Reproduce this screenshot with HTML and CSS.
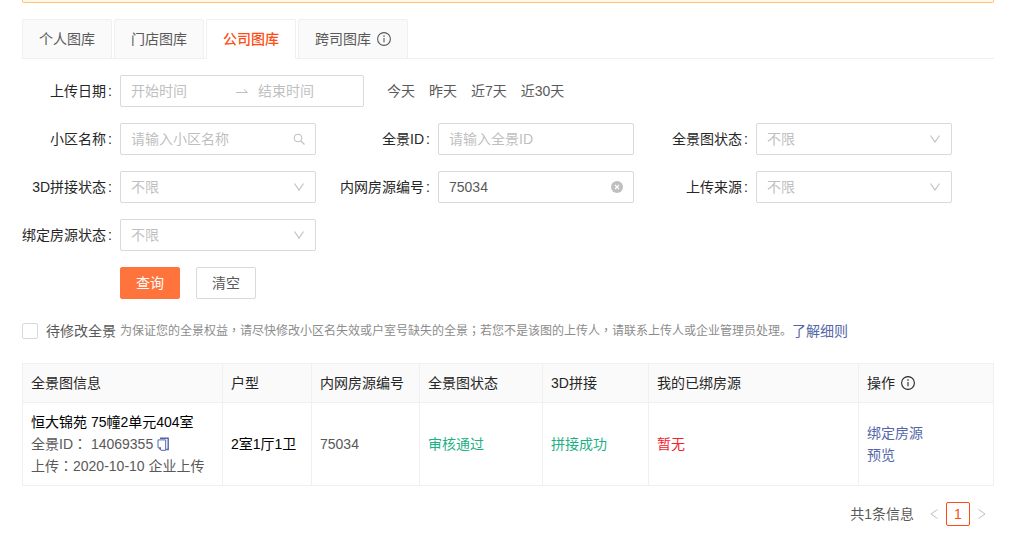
FILE: index.html
```html
<!DOCTYPE html>
<html lang="zh-CN">
<head>
<meta charset="utf-8">
<meta name="viewport" content="width=device-width, initial-scale=1">
<title>公司图库</title>
<link rel="stylesheet" href="styles.css">
</head>
<body>
<svg class="defs" aria-hidden="true">
  <symbol id="info" viewBox="0 0 14 14"><circle cx="7" cy="7" r="6.4" fill="none" stroke="currentColor" stroke-width="1.1"/><path d="M7 6v4.3" stroke="currentColor" stroke-width="1.1"/><circle cx="7" cy="4.1" r=".8" fill="currentColor"/></symbol>
  <symbol id="down" viewBox="0 0 12 12"><path d="M1.5 2.5 6 9l4.500-6.500" fill="none" stroke="currentColor" stroke-width="1.100"/></symbol>
</svg>
<main class="page">
  <div class="alert"></div>

  <div class="tabs" role="tablist">
    <button class="tab" type="button" role="tab">个人图库</button>
    <button class="tab" type="button" role="tab">门店图库</button>
    <button class="tab tab-active" type="button" role="tab" aria-selected="true">公司图库</button>
    <button class="tab" type="button" role="tab">跨司图库<svg class="icon-info"><use href="#info"/></svg></button>
  </div>

  <form class="filters">
    <div class="date-row">
      <label class="label" for="start">上传日期</label>
      <div class="range">
        <input class="range-input" id="start" type="text" placeholder="开始时间">
        <svg class="range-arrow" viewBox="0 0 12 12"><path d="M0 7.500h11.500L8 4.500" fill="none" stroke="currentColor"/></svg>
        <input class="range-input" type="text" placeholder="结束时间" aria-label="结束时间">
      </div>
      <div class="shortcuts">
        <button class="shortcut" type="button">今天</button>
        <button class="shortcut" type="button">昨天</button>
        <button class="shortcut" type="button">近7天</button>
        <button class="shortcut" type="button">近30天</button>
      </div>
    </div>

    <div class="grid">
      <div class="field">
        <label class="label" for="community">小区名称</label>
        <div class="control">
          <input class="box" id="community" type="text" placeholder="请输入小区名称">
          <svg class="suffix" viewBox="0 0 12 12"><circle cx="5" cy="5" r="3.900" fill="none" stroke="currentColor"/><path d="m7.800 7.800 3.700 3.700" stroke="currentColor" stroke-width="1.200"/></svg>
        </div>
      </div>
      <div class="field">
        <label class="label" for="pano">全景ID</label>
        <div class="control"><input class="box" id="pano" type="text" placeholder="请输入全景ID"></div>
      </div>
      <div class="field">
        <label class="label" for="status">全景图状态</label>
        <div class="control"><select class="box select" id="status"><option>不限</option></select><svg class="suffix"><use href="#down"/></svg></div>
      </div>
      <div class="field">
        <label class="label" for="stitch">3D拼接状态</label>
        <div class="control"><select class="box select" id="stitch"><option>不限</option></select><svg class="suffix"><use href="#down"/></svg></div>
      </div>
      <div class="field">
        <label class="label" for="house">内网房源编号</label>
        <div class="control">
          <input class="box" id="house" type="text" value="75034">
          <svg class="suffix" viewBox="0 0 12 12"><circle cx="6" cy="6" r="6" fill="currentColor"/><path d="m4 4 4 4M8 4 4 8" stroke="#fff" stroke-width="1.100"/></svg>
        </div>
      </div>
      <div class="field">
        <label class="label" for="source">上传来源</label>
        <div class="control"><select class="box select" id="source"><option>不限</option></select><svg class="suffix"><use href="#down"/></svg></div>
      </div>
      <div class="field">
        <label class="label" for="bind">绑定房源状态</label>
        <div class="control"><select class="box select" id="bind"><option>不限</option></select><svg class="suffix"><use href="#down"/></svg></div>
      </div>
    </div>

    <div class="actions">
      <button class="btn btn-primary" type="button">查询</button>
      <button class="btn" type="button">清空</button>
    </div>
  </form>

  <div class="notice">
    <input class="check" id="pending" type="checkbox">
    <label for="pending">待修改全景</label>
    <span class="hint">为保证您的全景权益<span class="punct" lang="zh-TW">，</span>请尽快修改小区名失效或户室号缺失的全景<span class="punct" lang="zh-TW">；</span>若您不是该图的上传人<span class="punct" lang="zh-TW">，</span>请联系上传人或企业管理员处理。</span>
    <a class="link" href="#">了解细则</a>
  </div>

  <table class="table">
    <colgroup><col class="col-info"><col class="col-type"><col class="col-no"><col class="col-status"><col class="col-stitch"><col><col class="col-ops"></colgroup>
    <thead>
      <tr><th>全景图信息</th><th>户型</th><th>内网房源编号</th><th>全景图状态</th><th>3D拼接</th><th>我的已绑房源</th><th>操作<svg class="icon-info"><use href="#info"/></svg></th></tr>
    </thead>
    <tbody>
      <tr>
        <td>
          <div class="strong">恒大锦苑 75幢2单元404室</div>
          <div>全景ID<span class="punct" lang="zh-TW">：</span> 14069355 <svg class="icon-copy" viewBox="0 0 12 14"><path d="M3 1.200h8.200v11.300h-2" fill="none" stroke="currentColor" stroke-width="1.400"/><path d="M1 2.900h7.700v10.400H4L1 10.300z" fill="none" stroke="currentColor"/><path d="M1 10.300h3v3z" fill="currentColor"/></svg></div>
          <div>上传<span class="punct" lang="zh-TW">：</span>2020-10-10 企业上传</div>
        </td>
        <td class="strong">2室1厅1卫</td>
        <td>75034</td>
        <td class="ok">审核通过</td>
        <td class="ok">拼接成功</td>
        <td class="none">暂无</td>
        <td><div><a class="link" href="#">绑定房源</a></div><div><a class="link" href="#">预览</a></div></td>
      </tr>
    </tbody>
  </table>

  <nav class="pager" aria-label="分页">
    <span class="total">共1条信息</span>
    <button class="page-arrow" type="button" aria-label="上一页"><svg class="chev" viewBox="0 0 8 10"><path d="M7.500.500 1 5l6.500 4.500" fill="none" stroke="currentColor"/></svg></button>
    <button class="page-num" type="button">1</button>
    <button class="page-arrow" type="button" aria-label="下一页"><svg class="chev" viewBox="0 0 8 10"><path d="M.500.500 7 5 .500 9.500" fill="none" stroke="currentColor"/></svg></button>
  </nav>
</main>
</body>
</html>
```
FILE: styles.css
```css
* { box-sizing: border-box; }

body {
  margin: 0;
  background: #fff;
  color: #595959;
  font: 14px/22px "Liberation Sans", "Noto Sans CJK SC", sans-serif;
}

button, input, select { font: inherit; color: inherit; }
button { cursor: pointer; }
.defs { position: absolute; width: 0; height: 0; }
.page { padding: 0 15px 0 22px; }

.alert {
  height: 3px;
  background: #fff8e8;
  border: 1px solid #ffc56e;
  border-top: 0;
  border-radius: 0 0 2px 2px;
}

.tabs {
  display: flex;
  gap: 2px;
  margin-top: 16px;
  border-bottom: 1px solid #f0f0f0;
}
.tab {
  display: flex;
  align-items: center;
  height: 40px;
  margin-bottom: -1px;
  padding: 0 15px;
  background: #fafafa;
  border: 1px solid #f0f0f0;
  border-radius: 2px 2px 0 0;
}
.tab {
  padding: 0 16px;
}
.tab-active {
  background: #fff;
  border-bottom-color: #fff;
  color: #fe4c14;
  font-weight: 500;
}
.icon-info { width: 14px; height: 14px; margin-left: 6px; flex: none; }

.filters { margin-top: 16px; }
.date-row, .field { display: flex; align-items: center; }
.label {
  width: 90px;
  margin-right: 8px;
  flex: none;
  color: #262626;
  text-align: right;
  white-space: nowrap;
}
.label::after { content: ":"; margin-left: 2px; }

.range {
  display: flex;
  align-items: center;
  gap: 10px;
  width: 244px;
  height: 32px;
  padding: 0 10px;
  border: 1px solid #d9d9d9;
  border-radius: 2px;
}
.range-input {
  flex: 1;
  min-width: 0;
  padding: 0;
  border: 0;
  outline: 0;
  background: none;
}
.range-arrow { width: 12px; height: 12px; color: #bfbfbf; }
::placeholder { color: #bfbfbf; opacity: 1; }

.shortcuts { display: flex; gap: 14px; margin-left: 23px; }
.shortcut { padding: 0; border: 0; background: none; }

.grid {
  display: grid;
  grid-template-columns: repeat(3, 1fr);
  gap: 16px 24px;
  margin-top: 16px;
  padding-right: 42px;
}
.control { position: relative; flex: 1; min-width: 0; }
.box {
  display: block;
  width: 100%;
  height: 32px;
  padding: 0 10px;
  background: #fff;
  border: 1px solid #d9d9d9;
  border-radius: 2px;
}
.select { appearance: none; color: #bfbfbf; }
.suffix {
  position: absolute;
  top: 10px;
  right: 11px;
  width: 12px;
  height: 12px;
  color: #bfbfbf;
  pointer-events: none;
}

.actions { display: flex; gap: 16px; margin: 16px 0 0 98px; }
.btn {
  height: 32px;
  padding: 0 15px;
  background: #fff;
  border: 1px solid #d9d9d9;
  border-radius: 2px;
}
.btn-primary {
  background: #ff733c;
  border-color: #ff733c;
  color: #fff;
}

.notice { display: flex; align-items: center; margin-top: 21px; }
.check {
  appearance: none;
  width: 16px;
  height: 16px;
  margin: 0 8px 0 0;
  border: 1px solid #d9d9d9;
  border-radius: 2px;
}
.hint { margin-left: 4px; color: #8c8c8c; font-size: 12px; }
.punct { font-family: "Noto Sans CJK TC", sans-serif; line-height: 1; }
.link { color: #5367a8; text-decoration: none; }

.table {
  width: 100%;
  margin-top: 21px;
  border-collapse: collapse;
  table-layout: fixed;
}
.table th, .table td {
  padding: 8px;
  border: 1px solid #f0f0f0;
  text-align: left;
}
.table th {
  height: 39px;
  background: #fafafa;
  color: #262626;
  font-weight: 400;
}
.table td { height: 83px; }
.col-info { width: 200px; }
.col-type { width: 89px; }
.col-no { width: 108px; }
.col-status { width: 123px; }
.col-stitch { width: 106px; }
.col-ops { width: 135px; }
th .icon-info { vertical-align: -2px; }
.icon-copy { width: 12px; height: 14px; color: #5367a8; vertical-align: -2px; }
.table .strong { color: #000; }
.table .ok { color: #1eaf86; }
.table .none { color: #f5222d; }

.pager {
  display: flex;
  align-items: center;
  justify-content: flex-end;
  margin-top: 16px;
}
.total { margin-right: 8px; }
.page-arrow, .page-num {
  display: flex;
  align-items: center;
  justify-content: center;
  width: 24px;
  height: 24px;
  padding: 0;
  background: none;
  border: 0;
  border-radius: 2px;
}
.page-arrow { color: #bfbfbf; }
.page-num { border: 1px solid #fe4c14; color: #fe4c14; }
.chev { width: 8px; height: 10px; }
```
